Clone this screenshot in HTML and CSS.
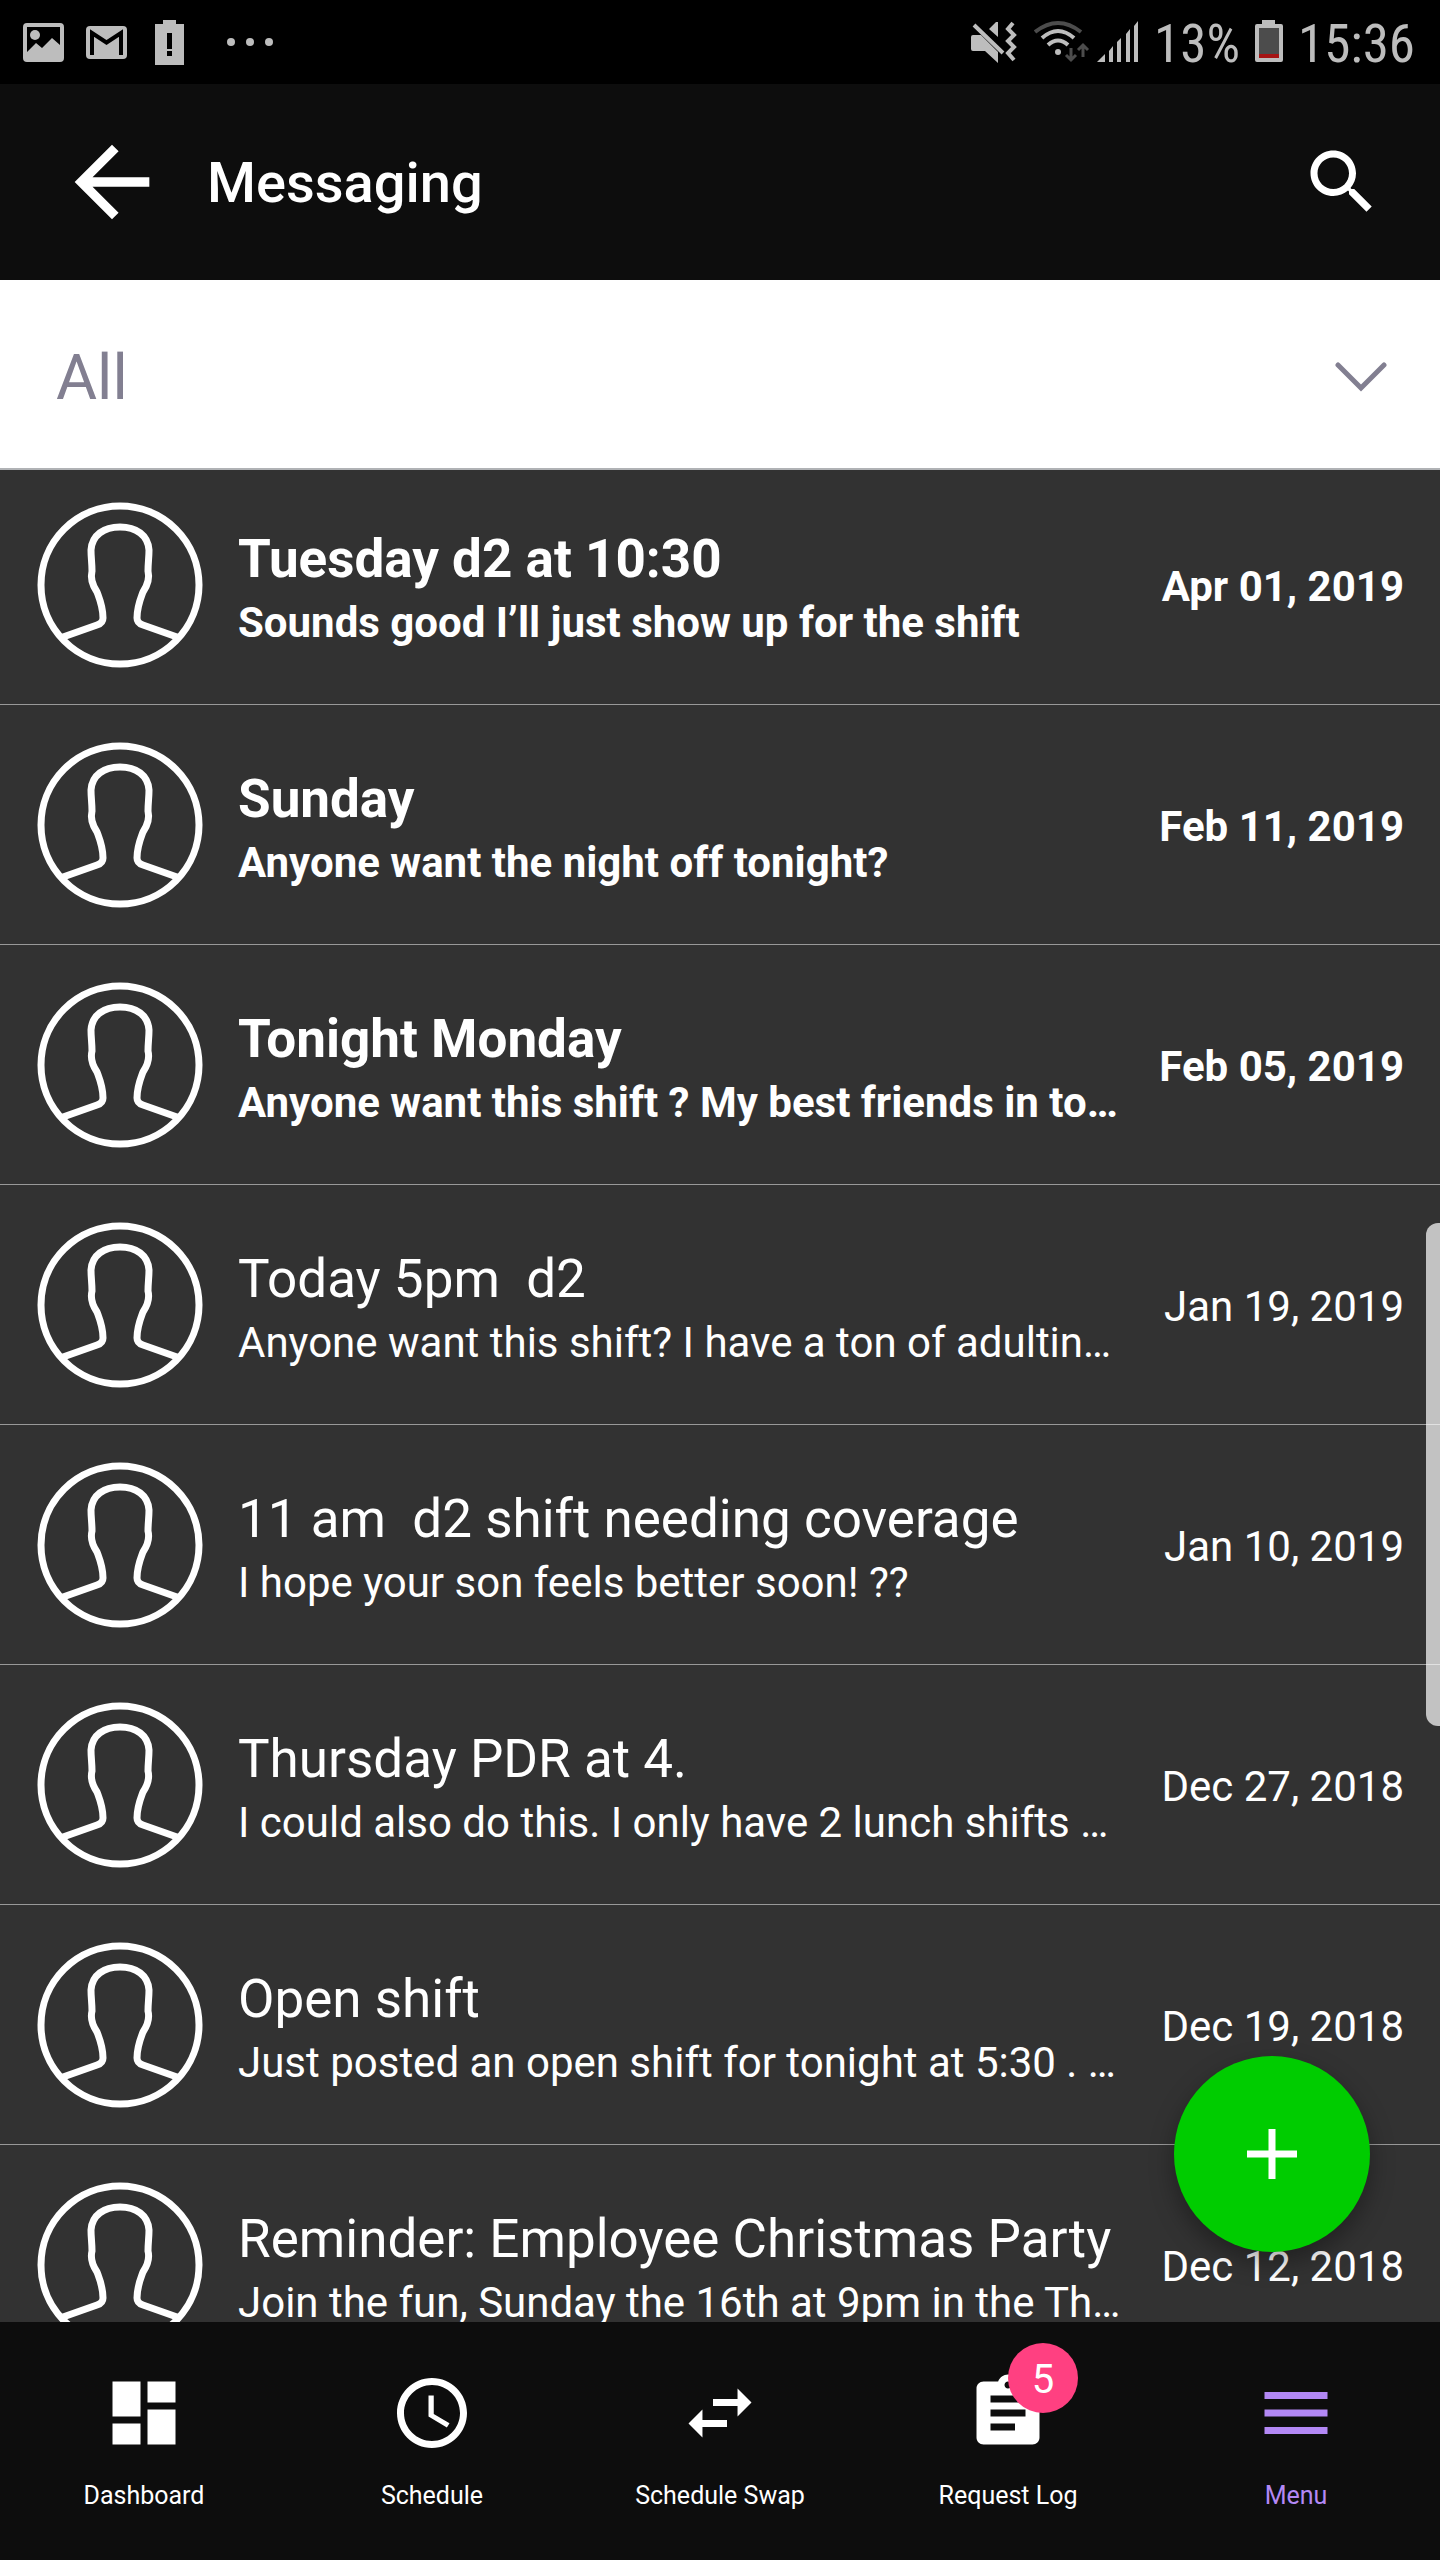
FILE: index.html
```html
<!DOCTYPE html>
<html lang="en">

<head>
    <title>Messaging</title>
    <meta charset="utf-8" />
    <meta name="viewport" content="width=device-width, initial-scale=1" />
    <link rel="stylesheet" href="styles.css">
</head>

<body>
    <!-- shared avatar, used by every message row -->
    <svg class="symbols" aria-hidden="true">
        <symbol id="avatar" viewBox="0 0 168 168">
            <circle cx="84" cy="84" r="79" />
            <path d="M27 136 61 124Q67 122 67 117C67 106 64 99 61 91C57 85 54 78 56 70C56 62 55 57 55 49C56 34 68 26 84 26C100 26 112 34 113 49C113 57 112 62 112 70C114 78 111 85 107 91C104 99 101 106 101 117Q101 122 107 124L141 136" />
        </symbol>
    </svg>

    <div class="status-bar">
        <div class="status-left">
            <svg width="41" height="46" viewBox="0 0 41 46">
                <path fill-rule="evenodd" d="M4 4h33a4 4 0 0 1 4 4v31a4 4 0 0 1-4 4H4a4 4 0 0 1-4-4V8a4 4 0 0 1 4-4zM4 8v25l9-9 6 5 10-10 8 7V8z" />
                <circle cx="12" cy="16" r="5" />
            </svg>
            <svg width="41" height="46" viewBox="0 0 41 46">
                <rect y="7" width="41" height="33" rx="4" />
                <path class="cut" d="M6 36V14l14.500 9.500L35 14v22" />
            </svg>
            <svg class="alert" width="29" height="46" viewBox="0 0 29 46">
                <path fill-rule="evenodd" d="M8 1h13v4h8v41H0V5h8zM12 14v16h5V14zM12 32v5h5v-5z" />
            </svg>
            <svg class="more" width="48" height="46" viewBox="0 0 48 46">
                <circle cx="5" cy="23" r="4" />
                <circle cx="24" cy="23" r="4" />
                <circle cx="43" cy="23" r="4" />
            </svg>
        </div>
        <div class="status-right">
            <svg width="46" height="46" viewBox="0 0 46 46">
                <path d="M2 16h8l17 17v11L14 32H2q-2 0-2-2V18q0-2 2-2zM27 3v15l-9-8 7-7z" />
                <path class="gap" d="M9 6 36 33" />
                <path class="line" d="m3 6 29 28M42 4l-5 6 6 6-6 6 6 6-6 6 6 7" />
            </svg>
            <svg class="wifi" width="56" height="46" viewBox="0 0 56 46">
                <path class="dim" d="M1 13q23-18 46 0" />
                <path class="line" d="M8 19q16-14 32 0M14 26q10-9 20 0" />
                <circle cx="24" cy="33" r="3" />
                <path class="dim thin" d="M37 29v12M32 36l5 5 5-5M49 38V27M44 31l5-5 5 5" />
            </svg>
            <svg class="signal" width="42" height="46" viewBox="0 0 42 46">
                <path d="M0 43l8-8v8zM12 43V32l4-5v16zM20 43V23l4-4v24zM29 43V15l4-5v33zM37 43V7l4-5v41z" />
            </svg>
            <span class="percent">13%</span>
            <svg width="28" height="46" viewBox="0 0 28 46">
                <path d="M7 1h13v4h6q2 0 2 2v34q0 2-2 2H2q-2 0-2-2V7q0-2 2-2h5z" />
                <path fill="#4c4c4c" d="M4 9h20v26H4z" />
                <path fill="#a51414" d="M4 35h20v4H4z" />
            </svg>
            <span class="clock">15:36</span>
        </div>
    </div>

    <header class="header">
        <button type="button" aria-label="Back">
            <svg width="112" height="112" viewBox="0 0 24 24"><path d="M20 11H7.830l5.590-5.590L12 4l-8 8 8 8 1.410-1.410L7.830 13H20v-2z" /></svg>
        </button>
        <h1>Messaging</h1>
        <button type="button" aria-label="Search">
            <svg width="84" height="84" viewBox="0 0 24 24"><path d="M15.500 14h-.79l-.28-.27C15.410 12.590 16 11.110 16 9.500 16 5.910 13.090 3 9.500 3S3 5.910 3 9.500 5.910 16 9.500 16c1.610 0 3.090-.59 4.230-1.570l.27.28v.79l5 4.990L20.490 19l-4.990-5zm-6 0C7.010 14 5 11.990 5 9.500S7.010 5 9.500 5 14 7.010 14 9.500 11.990 14 9.500 14z" /></svg>
        </button>
    </header>

    <div class="filter">
        <select aria-label="Show messages">
            <option>All</option>
        </select>
        <svg width="52" height="30" viewBox="0 0 52 30"><path d="M3 3l23 23L49 3" /></svg>
    </div>

    <main class="messages">
        <ul>
            <li class="unread">
                <svg class="avatar"><use href="#avatar" /></svg>
                <div class="text">
                    <h2>Tuesday d2 at 10:30</h2>
                    <p>Sounds good I’ll just show up for the shift</p>
                </div>
                <time>Apr 01, 2019</time>
            </li>
            <li class="unread">
                <svg class="avatar"><use href="#avatar" /></svg>
                <div class="text">
                    <h2>Sunday</h2>
                    <p>Anyone want the night off tonight?</p>
                </div>
                <time>Feb 11, 2019</time>
            </li>
            <li class="unread">
                <svg class="avatar"><use href="#avatar" /></svg>
                <div class="text">
                    <h2>Tonight Monday</h2>
                    <p>Anyone want this shift ? My best friends in to…</p>
                </div>
                <time>Feb 05, 2019</time>
            </li>
            <li>
                <svg class="avatar"><use href="#avatar" /></svg>
                <div class="text">
                    <h2>Today 5pm&nbsp; d2</h2>
                    <p>Anyone want this shift? I have a ton of adultin…</p>
                </div>
                <time>Jan 19, 2019</time>
            </li>
            <li>
                <svg class="avatar"><use href="#avatar" /></svg>
                <div class="text">
                    <h2>11 am&nbsp; d2 shift needing coverage</h2>
                    <p>I hope your son feels better soon! ??</p>
                </div>
                <time>Jan 10, 2019</time>
            </li>
            <li>
                <svg class="avatar"><use href="#avatar" /></svg>
                <div class="text">
                    <h2>Thursday PDR at 4.</h2>
                    <p>I could also do this. I only have 2 lunch shifts …</p>
                </div>
                <time>Dec 27, 2018</time>
            </li>
            <li>
                <svg class="avatar"><use href="#avatar" /></svg>
                <div class="text">
                    <h2>Open shift</h2>
                    <p>Just posted an open shift for tonight at 5:30 . …</p>
                </div>
                <time>Dec 19, 2018</time>
            </li>
            <li>
                <svg class="avatar"><use href="#avatar" /></svg>
                <div class="text">
                    <h2>Reminder: Employee Christmas Party</h2>
                    <p>Join the fun, Sunday the 16th at 9pm in the Th…</p>
                </div>
                <time>Dec 12, 2018</time>
            </li>
        </ul>
        <div class="scrollbar"></div>
        <button class="compose" type="button" aria-label="New message">
            <svg width="50" height="50" viewBox="0 0 50 50"><path d="M25 0v50M0 25h50" /></svg>
        </button>
    </main>

    <nav class="tabs">
        <a href="#dashboard">
            <span class="icon"><svg viewBox="0 0 24 24"><path d="M3 13h8V3H3v10zm0 8h8v-6H3v6zm10 0h8V11h-8v10zm0-18v6h8V3h-8z" /></svg></span>
            Dashboard
        </a>
        <a href="#schedule">
            <span class="icon"><svg viewBox="0 0 24 24"><path d="M11.990 2C6.470 2 2 6.480 2 12s4.470 10 9.990 10C17.520 22 22 17.520 22 12S17.520 2 11.990 2zM12 20c-4.420 0-8-3.580-8-8s3.580-8 8-8 8 3.580 8 8-3.580 8-8 8zM12.500 7H11v6l5.250 3.150.75-1.230-4.500-2.670z" /></svg></span>
            Schedule
        </a>
        <a href="#swap">
            <span class="icon"><svg viewBox="0 0 24 24"><path d="M6.990 11L3 15l3.990 4v-3H14v-2H6.990v-3zM21 9l-3.990-4v3H10v2h7.010v3L21 9z" /></svg></span>
            Schedule Swap
        </a>
        <a href="#requests">
            <span class="icon">
                <svg viewBox="0 0 24 24"><path d="M19 3h-4.180C14.400 1.840 13.300 1 12 1c-1.300 0-2.400.84-2.820 2H5c-1.100 0-2 .9-2 2v14c0 1.100.9 2 2 2h14c1.100 0 2-.9 2-2V5c0-1.100-.9-2-2-2zm-7 0c.55 0 1 .45 1 1s-.45 1-1 1-1-.45-1-1 .45-1 1-1zm2 14H7v-2h7v2zm3-4H7v-2h10v2zm0-4H7V7h10v2z" /></svg>
                <span class="badge">5</span>
            </span>
            Request Log
        </a>
        <a class="active" href="#menu">
            <span class="icon"><svg viewBox="0 0 24 24"><path d="M3 18h18v-2H3v2zm0-5h18v-2H3v2zm0-7v2h18V6H3z" /></svg></span>
            Menu
        </a>
    </nav>
</body>

</html>
```
FILE: styles.css
```css
* {
    box-sizing: border-box;
}

body {
    margin: 0;
    height: 100vh;
    display: flex;
    flex-direction: column;
    background: #323232;
    color: #fff;
    font-family: Roboto, sans-serif;
}

h1,
h2,
p,
ul {
    margin: 0;
    padding: 0;
}

button {
    padding: 0;
    border: 0;
    background: none;
    color: inherit;
}

svg {
    display: block;
    fill: currentColor;
    flex: none;
}

.symbols {
    position: absolute;
    width: 0;
    height: 0;
}

/* status bar */

.status-bar {
    flex: none;
    height: 84px;
    padding: 0 25px 0 23px;
    display: flex;
    align-items: center;
    justify-content: space-between;
    background: #000;
    color: #bdbdbd;
    font-family: "Roboto Condensed", Roboto, sans-serif;
    font-size: 53px;
}

.status-left,
.status-right {
    display: flex;
    align-items: center;
}

.status-left {
    gap: 22px;
}

.alert {
    margin-left: 6px;
}

.more {
    margin-left: 20px;
}

.status-right {
    gap: 15px;
}

.status-right span {
    padding-top: 4px;
}

.wifi {
    margin-left: 2px;
}

.signal {
    margin-left: -8px;
}

.cut,
.gap {
    fill: none;
    stroke: #000;
    stroke-width: 4;
}

.gap {
    stroke-width: 6;
}

.line,
.dim {
    fill: none;
    stroke: #bdbdbd;
    stroke-width: 4;
}

.dim {
    stroke: #4c4c4c;
}

.thin {
    stroke-width: 3;
}

/* header */

.header {
    flex: none;
    height: 196px;
    padding: 0 56px;
    display: flex;
    align-items: center;
    background: #0d0d0d;
}

.header h1 {
    flex: 1;
    margin-left: 39px;
    padding-top: 2px;
    font-size: 56px;
    font-weight: 500;
}

.filter {
    flex: none;
    position: relative;
    height: 190px;
    background: #fff;
    border-bottom: 2px solid #b0b2b5;
    color: #827f91;
}

.filter select {
    width: 100%;
    height: 100%;
    padding: 6px 56px 0;
    appearance: none;
    border: 0;
    background: none;
    color: inherit;
    font-family: inherit;
    font-size: 63px;
}

.filter svg {
    position: absolute;
    right: 53px;
    top: 82px;
    fill: none;
    stroke: currentColor;
    stroke-width: 5;
    stroke-linecap: round;
    pointer-events: none;
}

/* message list */

.messages {
    flex: 1;
    min-height: 0;
    position: relative;
    overflow: hidden;
}

.messages ul {
    list-style: none;
}

.messages li {
    display: flex;
    align-items: center;
    gap: 34px;
    padding: 36px 36px 35px;
    border-bottom: 1px solid #999;
}

.messages li:first-child {
    padding-top: 31px;
}

.avatar {
    width: 168px;
    height: 168px;
    fill: none;
    stroke: #fff;
    stroke-width: 7;
}

.text {
    flex: 1;
    min-width: 0;
    padding-top: 8px;
    white-space: nowrap;
}

.text h2 {
    font-size: 53px;
    font-weight: 400;
    line-height: 68px;
}

.text p {
    font-size: 42px;
    line-height: 60px;
}

.messages time {
    padding-top: 2px;
    font-size: 42px;
}

.unread h2,
.unread p,
.unread time {
    font-weight: 700;
}

.scrollbar {
    position: absolute;
    top: 753px;
    right: 0;
    width: 14px;
    height: 503px;
    border-radius: 12px 0 0 12px;
    background: rgba(255, 255, 255, 0.7);
}

.compose {
    position: absolute;
    right: 70px;
    bottom: 70px;
    width: 196px;
    height: 196px;
    display: flex;
    align-items: center;
    justify-content: center;
    border-radius: 50%;
    background: #00cc00;
    box-shadow: 0 10px 24px rgba(0, 0, 0, 0.35);
}

.compose svg {
    stroke: #fff;
    stroke-width: 7;
}

/* bottom tabs */

.tabs {
    flex: none;
    display: grid;
    grid-template-columns: repeat(5, 1fr);
    height: 238px;
    padding-top: 49px;
    background: #0d0d0d;
}

.tabs a {
    display: flex;
    flex-direction: column;
    align-items: center;
    gap: 25px;
    color: #fff;
    font-size: 25px;
    line-height: 32px;
    text-decoration: none;
}

.tabs .active {
    color: #b388f5;
}

.icon {
    position: relative;
    width: 84px;
    height: 84px;
}

.badge {
    position: absolute;
    top: -28px;
    left: 42px;
    width: 70px;
    height: 70px;
    border-radius: 50%;
    background: #ff4081;
    color: #fff;
    font-size: 40px;
    line-height: 74px;
    text-align: center;
}
```
